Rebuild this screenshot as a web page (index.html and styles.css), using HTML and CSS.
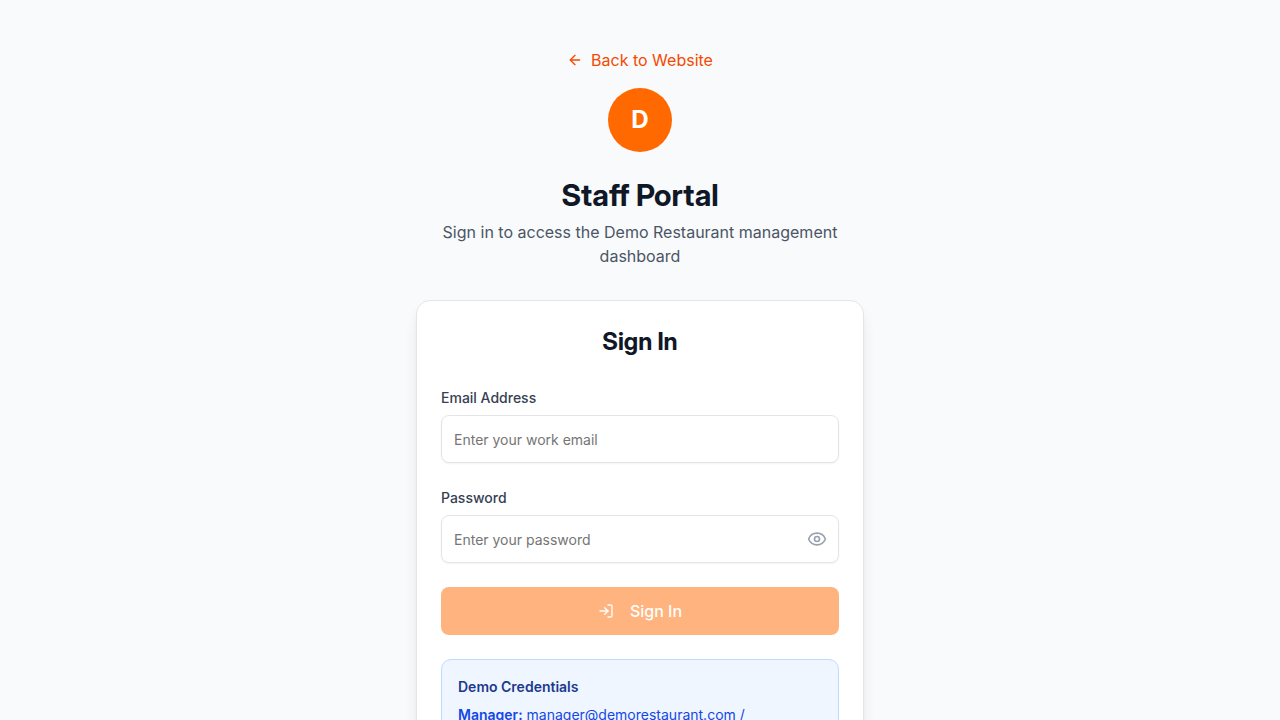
FILE: index.html
```html
<!DOCTYPE html>
<html lang="en">
<head>
<meta charset="utf-8">
<meta name="viewport" content="width=device-width, initial-scale=1">
<title>Staff Portal</title>
<link rel="stylesheet" href="styles.css">
</head>
<body>
<main class="page">
  <header class="intro">
    <a class="back-link" href="#">
      <svg class="icon" viewBox="0 0 24 24" aria-hidden="true"><path d="m12 19-7-7 7-7"/><path d="M19 12H5"/></svg>
      Back to Website
    </a>
    <div class="logo">D</div>
    <h1 class="title">Staff Portal</h1>
    <p class="subtitle">Sign in to access the Demo Restaurant management dashboard</p>
  </header>
  <section class="card">
    <h2 class="card-title">Sign In</h2>
    <form class="form">
      <div class="field">
        <label class="label" for="email">Email Address</label>
        <input class="input" id="email" type="email" placeholder="Enter your work email">
      </div>
      <div class="field">
        <label class="label" for="password">Password</label>
        <div class="password">
          <input class="input input-password" id="password" type="password" placeholder="Enter your password">
          <button class="reveal" type="button" aria-label="Show password">
            <svg class="icon icon-eye" viewBox="0 0 24 24" aria-hidden="true"><path d="M2.062 12.348a1 1 0 0 1 0-.696 10.75 10.75 0 0 1 19.876 0 1 1 0 0 1 0 .696 10.75 10.75 0 0 1-19.876 0"/><circle cx="12" cy="12" r="3"/></svg>
          </button>
        </div>
      </div>
      <button class="submit" type="submit" disabled>
        <svg class="icon" viewBox="0 0 24 24" aria-hidden="true"><path d="M15 3h4a2 2 0 0 1 2 2v14a2 2 0 0 1-2 2h-4"/><path d="m10 17 5-5-5-5"/><path d="M15 12H3"/></svg>
        Sign In
      </button>
    </form>
    <aside class="demo">
      <h3 class="demo-title">Demo Credentials</h3>
      <p class="demo-line"><strong class="demo-role">Manager:</strong> manager@demorestaurant.com /</p>
    </aside>
  </section>
</main>
</body>
</html>
```
FILE: styles.css
```css
* {
  box-sizing: border-box;
  margin: 0;
}

body {
  background: #f9fafb;
  color: #101828;
  font-family: Inter, "Liberation Sans", sans-serif;
  font-size: 16px;
  line-height: 24px;
}

.page {
  max-width: 480px;
  margin: 0 auto;
  padding: 48px 16px;
}

.intro {
  display: flex;
  flex-direction: column;
  align-items: center;
  margin-bottom: 32px;
  text-align: center;
}

.icon {
  width: 16px;
  height: 16px;
  flex: none;
  fill: none;
  stroke: currentColor;
  stroke-width: 2;
  stroke-linecap: round;
  stroke-linejoin: round;
}

.back-link {
  display: inline-flex;
  align-items: center;
  gap: 8px;
  margin-bottom: 16px;
  color: #f54900;
  text-decoration: none;
}

.logo,
.title,
.card-title {
  font-family: "Inter Display", Inter, "Liberation Sans", sans-serif;
  font-weight: 700;
}

.logo {
  display: flex;
  align-items: center;
  justify-content: center;
  width: 64px;
  height: 64px;
  margin-bottom: 24px;
  border-radius: 50%;
  background: #ff6900;
  color: #fff;
  font-size: 24px;
  line-height: 34px;
}

.title {
  margin-bottom: 6px;
  font-size: 30px;
  line-height: 38px;
}

.subtitle {
  color: #4a5565;
}

.card {
  padding: 24px;
  border: 1px solid #e5e5e5;
  border-radius: 14px;
  background: #fff;
  box-shadow: 0 10px 15px -3px rgb(0 0 0 / 10%), 0 4px 6px -4px rgb(0 0 0 / 10%);
}

.card-title {
  margin-bottom: 28px;
  font-size: 24px;
  line-height: 34px;
  text-align: center;
}

.form {
  display: flex;
  flex-direction: column;
  gap: 24px;
}

.field {
  display: flex;
  flex-direction: column;
  gap: 6px;
}

.label {
  color: #364153;
  font-size: 14px;
  font-weight: 500;
  line-height: 22px;
}

.input {
  width: 100%;
  height: 48px;
  padding: 4px 12px;
  border: 1px solid #e5e5e5;
  border-radius: 8px;
  background: #fff;
  box-shadow: 0 1px 2px rgb(0 0 0 / 5%);
  color: inherit;
  font: inherit;
  font-size: 14px;
}

.input::placeholder {
  color: #757575;
}

.password {
  position: relative;
}

.input-password {
  display: block;
  padding-right: 40px;
}

.reveal {
  position: absolute;
  top: 0;
  right: 12px;
  bottom: 0;
  display: flex;
  align-items: center;
  padding: 0;
  border: 0;
  background: none;
  color: #99a1af;
}

.icon-eye {
  width: 20px;
  height: 20px;
}

.submit {
  display: flex;
  align-items: center;
  justify-content: center;
  gap: 16px;
  height: 48px;
  border: 0;
  border-radius: 8px;
  background: #ff6900;
  color: #fff;
  font: inherit;
  font-weight: 500;
}

.submit:disabled {
  opacity: 0.5;
}

.demo {
  margin-top: 24px;
  padding: 16px;
  border: 1px solid #bedbff;
  border-radius: 10px;
  background: #eff6ff;
  color: #1447e6;
  font-size: 14px;
  line-height: 22px;
}

.demo-title {
  margin-bottom: 6px;
  color: #1c398e;
  font-size: 14px;
  font-weight: 600;
}

.demo-role {
  font-weight: 600;
}
```
